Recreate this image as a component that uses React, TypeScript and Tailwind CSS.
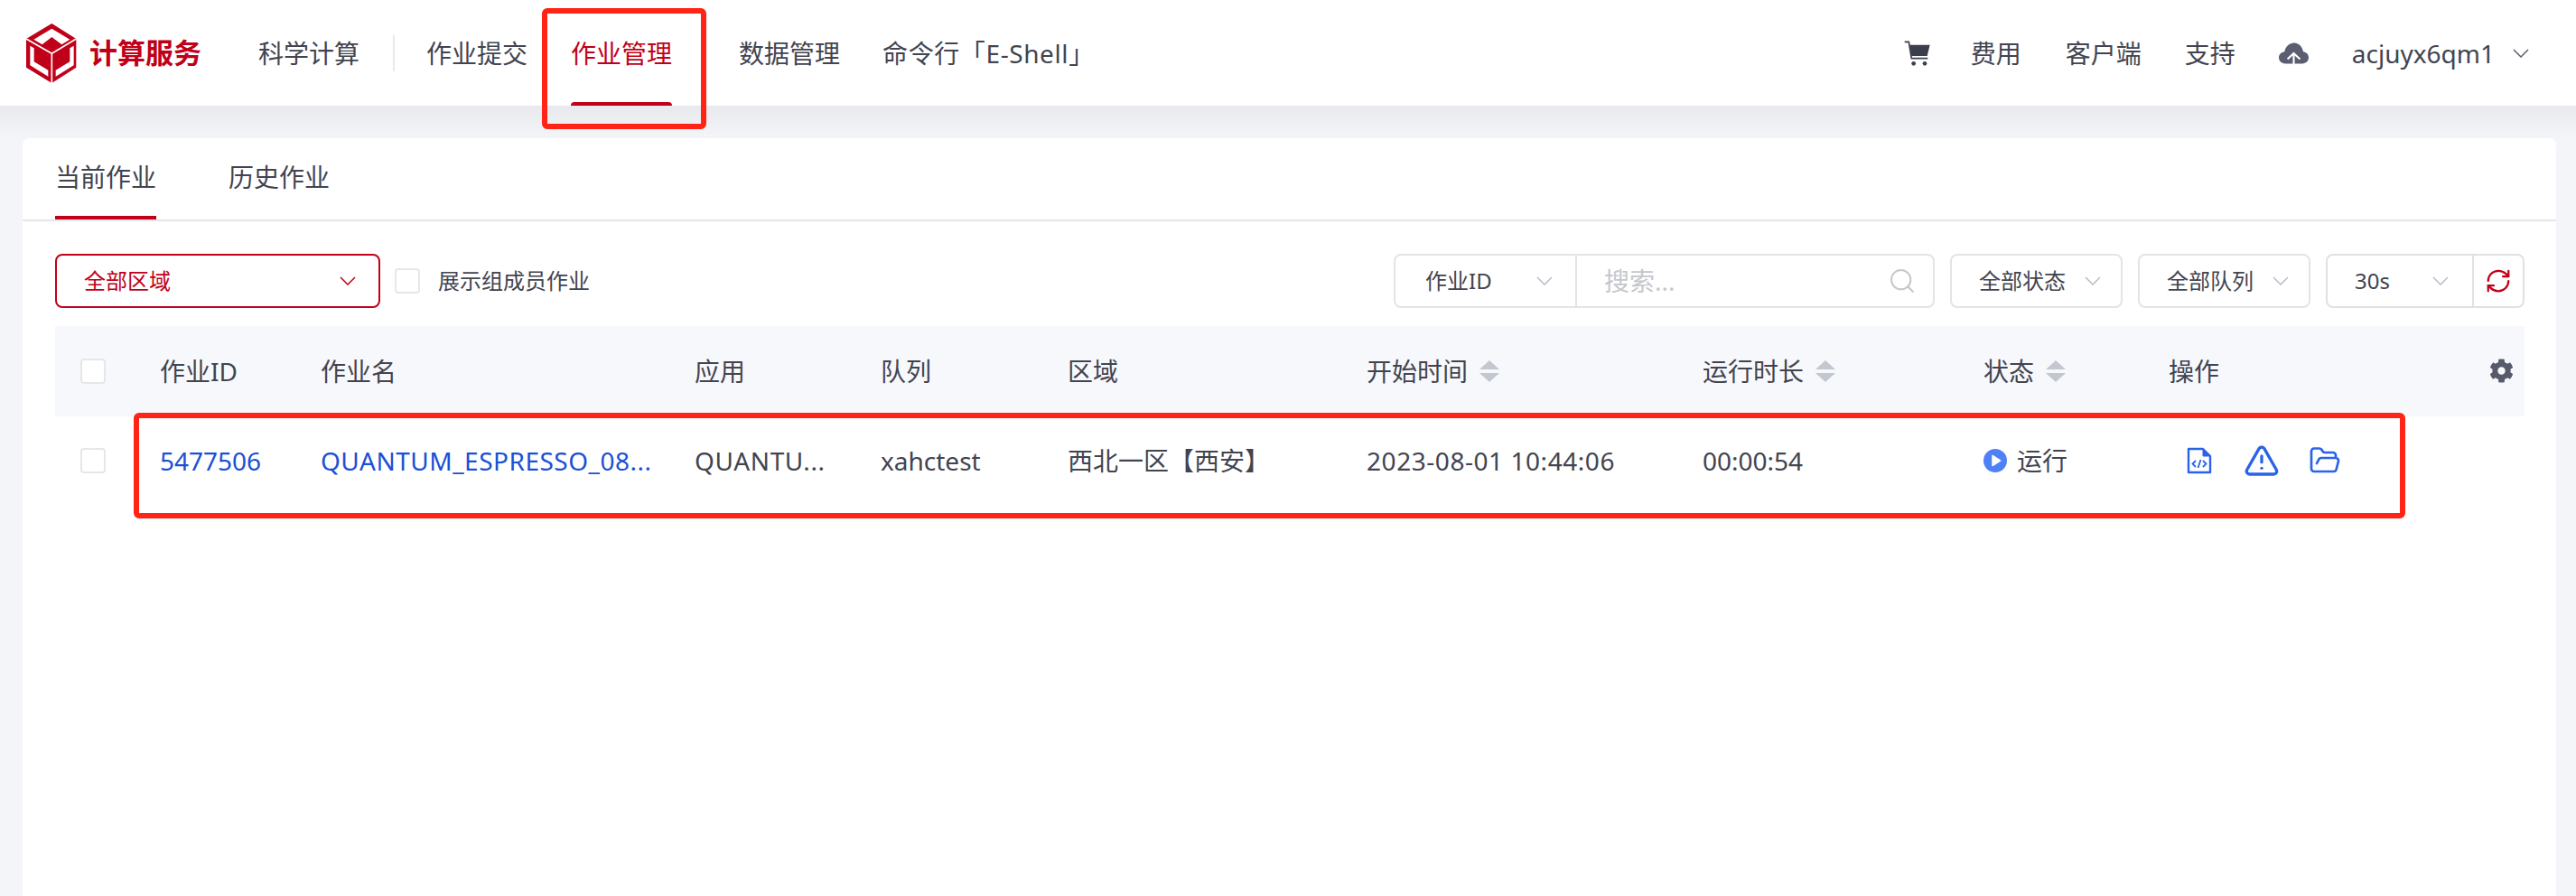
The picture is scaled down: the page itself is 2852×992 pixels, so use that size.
import React from "react";
import { FolderOpen, RefreshCw, Search, TriangleAlert } from "lucide-react";
import { FaCog } from "react-icons/fa";

const Chevron = ({ className }: { className: string }) => (
    <svg viewBox="0 0 18 10" className={`w-[18px] h-[10px] ${className}`} fill="none" stroke="currentColor" strokeWidth="1.5">
        <polyline points="1,1 9,9 17,1" />
    </svg>
);

const Logo = () => (
    <svg viewBox="0 0 168 198" className="w-[56px] h-[66px]">
        <g transform="translate(-27,-16)">
            <polygon points="112,16 193,67 193,162 112,214 27,162 27,67" fill="#c00018" />
            <polygon points="112,33 172,69 145,86 112,61 80,86 52,69" fill="#fff" />
            <path d="M27 67 L112 116 L193 67 M112 116 V214" fill="none" stroke="#fff" strokeWidth="5" />
            <polygon points="40,90 53,98 53,143 100,171 100,192 40,155" fill="#fff" />
            <polygon points="185,90 172,98 172,143 125,171 125,192 185,155" fill="#fff" />
        </g>
    </svg>
);

const Cart = () => (
    <svg viewBox="33 36 87 84" className="w-[29px] h-[28px]">
        <path d="M35 40 H49 L58 95 H112" fill="none" stroke="#3b3f4d" strokeWidth="5" />
        <polygon points="52,50 119,50 110,87 58,87" fill="#3b3f4d" />
        <circle cx="65" cy="112" r="7" fill="#3b3f4d" />
        <circle cx="102" cy="112" r="7" fill="#3b3f4d" />
    </svg>
);

const CloudUp = () => (
    <svg viewBox="34 40 110 80" className="w-[33px] h-[26px]">
        <path
            d="M58 118 C44 118 34 108 34 96 C34 84 44 75 55 74 C59 54 74 42 90 42 C106 42 120 54 124 74 C135 75 144 84 144 96 C144 108 134 118 120 118 Z"
            fill="#5a5e70"
        />
        <path d="M66 102 L89 80 L112 102 M89 80 V120" fill="none" stroke="#fff" strokeWidth="7" />
    </svg>
);

const FileCodeIcon = () => (
    <svg viewBox="0 0 28 30" className="w-[28px] h-[30px]" fill="none" stroke="#2a63e8">
        <path d="M2 2 H18 L26 10 V28 H2 Z" strokeWidth="2.4" strokeLinejoin="round" />
        <path d="M18 2 L26 10 H18 Z" fill="#2a63e8" strokeWidth="1" />
        <path d="M10 15 L6.5 18.5 L10 22 M18 15 L21.5 18.5 L18 22 M15.5 14 L12.5 23" strokeWidth="1.8" />
    </svg>
);

const RunIcon = () => (
    <svg viewBox="0 0 26 26" className="w-[26px] h-[26px]">
        <circle cx="13" cy="13" r="13" fill="#5080f8" />
        <polygon points="10,7.5 18.5,13 10,18.5" fill="#fff" stroke="#fff" strokeWidth="1.5" strokeLinejoin="round" />
    </svg>
);

const SortArrows = () => (
    <svg viewBox="0 0 22 26" className="w-[22px] h-[26px] ml-[13px]" fill="#c3c7d0">
        <polygon points="11,1 22,11 0,11" />
        <polygon points="0,15 22,15 11,25" />
    </svg>
);

const CheckBox = ({ className = "" }: { className?: string }) => (
    <div className={`w-[28px] h-[28px] rounded-[4px] border-2 border-[#e6e7ea] bg-white shrink-0 ${className}`} />
);

const navItems = [
    { label: "作业提交", className: "ml-[35px]" },
    { label: "作业管理", className: "ml-[48px]", active: true },
    { label: "数据管理", className: "ml-[74px]" },
    { label: "命令行「E-Shell」", className: "ml-[47px] tracking-[0.6px]" },
];

const columns = [
    { label: "作业ID", width: "w-[178px]" },
    { label: "作业名", width: "w-[414px]" },
    { label: "应用", width: "w-[206px]" },
    { label: "队列", width: "w-[207px]" },
    { label: "区域", width: "w-[331px]" },
    { label: "开始时间", width: "w-[372px]", sort: true },
    { label: "运行时长", width: "w-[311px]", sort: true },
    { label: "状态", width: "w-[205px]", sort: true },
    { label: "操作", width: "w-[300px]" },
];

const App = () => {
    return (
        <div className="relative w-[2852px] h-[992px] overflow-hidden flex flex-col text-[28px] text-[#42444f] bg-[#f4f5f9] [font-family:'Noto_Sans','Noto_Sans_CJK_SC',sans-serif]">
            {/* Header */}
            <header className="h-[117px] shrink-0 bg-white flex items-center pl-[29px] pr-[52px]">
                <Logo />
                <span className="ml-[14px] text-[31px] leading-none font-bold text-[#c00018]">计算服务</span>
                <span className="ml-[63px]">科学计算</span>
                <div className="ml-[37px] w-[2px] h-[40px] bg-[#e8e9eb]" />
                {navItems.map((item) => (
                    <div
                        key={item.label}
                        className={`relative h-full flex items-center ${item.className} ${item.active ? "text-[#c00018]" : ""}`}
                    >
                        {item.label}
                        {item.active && <div className="absolute left-0 right-0 bottom-0 h-[4px] rounded-t-[4px] bg-[#c00018]" />}
                    </div>
                ))}
                <div className="ml-auto flex items-center">
                    <Cart />
                    <span className="ml-[45px]">费用</span>
                    <span className="ml-[49px]">客户端</span>
                    <span className="ml-[48px]">支持</span>
                    <div className="ml-[48px]">
                        <CloudUp />
                    </div>
                    <span className="ml-[48px]">acjuyx6qm1</span>
                    <Chevron className="ml-[20px] text-[#5a5e70]" />
                </div>
            </header>

            {/* Content */}
            <main className="flex-1 pt-[36px] px-[25px] bg-[linear-gradient(#e8e9ed,#f4f5f9_36px)]">
                <div className="h-full w-[2805px] bg-white rounded-t-[8px]">
                    {/* Tabs */}
                    <div className="h-[92px] px-[36px] flex gap-[80px] border-b-2 border-[#e5e6e9]">
                        <div className="flex items-center border-b-4 border-[#c00018]">当前作业</div>
                        <div className="flex items-center border-b-4 border-transparent">历史作业</div>
                    </div>

                    <div className="pt-[36px] pl-[36px] w-[2770px]">
                        {/* Filters */}
                        <div className="flex items-center text-[24px] h-[60px]">
                            <div className="w-[360px] h-[60px] flex items-center justify-between pl-[30px] pr-[25px] rounded-[8px] border-2 border-[#c00018] text-[#c00018]">
                                全部区域
                                <Chevron className="text-[#c00018]" />
                            </div>
                            <CheckBox className="ml-[16px]" />
                            <span className="ml-[20px]">展示组成员作业</span>

                            <div className="ml-auto flex items-center gap-[17px]">
                                <div className="w-[599px] h-[60px] flex items-center rounded-[8px] border-2 border-[#e2e4e8]">
                                    <div className="w-[201px] h-full flex items-center justify-between pl-[33px] pr-[25px] border-r-2 border-[#e2e4e8]">
                                        作业ID
                                        <Chevron className="text-[#b8bcc6]" />
                                    </div>
                                    <span className="ml-[30px] text-[28px] text-[#c5c7cc]">搜索...</span>
                                    <Search className="ml-auto mr-[18px] w-[32px] h-[32px] text-[#c5c7cc]" strokeWidth={1.5} />
                                </div>
                                <div className="w-[191px] h-[60px] flex items-center justify-between pl-[30px] pr-[22px] rounded-[8px] border-2 border-[#e2e4e8]">
                                    全部状态
                                    <Chevron className="text-[#b8bcc6]" />
                                </div>
                                <div className="w-[191px] h-[60px] flex items-center justify-between pl-[30px] pr-[22px] rounded-[8px] border-2 border-[#e2e4e8]">
                                    全部队列
                                    <Chevron className="text-[#b8bcc6]" />
                                </div>
                                <div className="w-[220px] h-[60px] flex items-center rounded-[8px] border-2 border-[#dfe1e6]">
                                    <div className="w-[162px] h-full flex items-center justify-between pl-[30px] pr-[26px] border-r-2 border-[#dfe1e6]">
                                        30s
                                        <Chevron className="text-[#b8bcc6]" />
                                    </div>
                                    <RefreshCw className="ml-[12px] w-[30px] h-[30px] text-[#c00018]" strokeWidth={1.8} />
                                </div>
                            </div>
                        </div>

                        {/* Table */}
                        <div className="mt-[20px] w-[2734px]">
                            <div className="relative h-[100px] flex items-center pl-[28px] bg-[#f7f8fc]">
                                <CheckBox className="mr-[60px]" />
                                {columns.map((col) => (
                                    <div key={col.label} className={`${col.width} shrink-0 flex items-center`}>
                                        {col.label}
                                        {col.sort && <SortArrows />}
                                    </div>
                                ))}
                                <FaCog className="absolute right-[12px] top-[36px] w-[27px] h-[27px] text-[#565a6b]" />
                            </div>
                            <div className="h-[98px] flex items-center pl-[28px]">
                                <CheckBox className="mr-[60px]" />
                                <div className="w-[178px] shrink-0 text-[#1a4fd6]">5477506</div>
                                <div className="w-[414px] shrink-0 text-[#1a4fd6] tracking-[0.5px]">QUANTUM_ESPRESSO_08...</div>
                                <div className="w-[206px] shrink-0 tracking-[0.6px]">QUANTU...</div>
                                <div className="w-[207px] shrink-0">xahctest</div>
                                <div className="w-[331px] shrink-0">西北一区【西安】</div>
                                <div className="w-[372px] shrink-0 tracking-[0.55px]">2023-08-01 10:44:06</div>
                                <div className="w-[311px] shrink-0">00:00:54</div>
                                <div className="w-[205px] shrink-0 flex items-center gap-[11px]">
                                    <RunIcon />
                                    运行
                                </div>
                                <div className="flex items-center text-[#2a63e8]">
                                    <div className="ml-[20px]">
                                        <FileCodeIcon />
                                    </div>
                                    <TriangleAlert className="ml-[35px] w-[40px] h-[40px]" strokeWidth={2} />
                                    <FolderOpen className="ml-[32px] w-[36px] h-[36px]" strokeWidth={1.8} />
                                </div>
                            </div>
                        </div>
                    </div>
                </div>
            </main>

            {/* Annotation boxes */}
            <div className="absolute left-[600px] top-[9px] w-[182px] h-[134px] border-[6px] border-[#ff2415] rounded-[6px]" />
            <div className="absolute left-[148px] top-[457px] w-[2515px] h-[117px] border-[6px] border-[#ff2415] rounded-[6px]" />
        </div>
    );
};

export default App;
